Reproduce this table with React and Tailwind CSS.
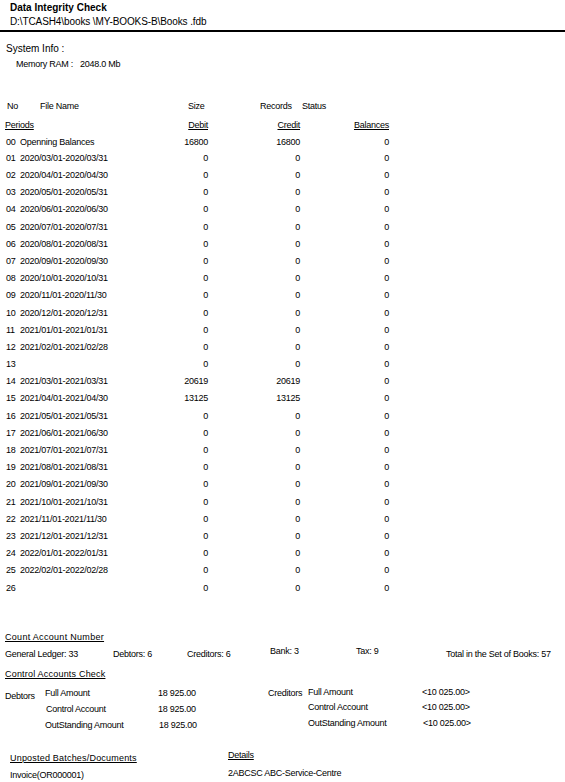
const periods = [
  ["01", "2020/03/01-2020/03/31"],
  ["02", "2020/04/01-2020/04/30"],
  ["03", "2020/05/01-2020/05/31"],
  ["04", "2020/06/01-2020/06/30"],
  ["05", "2020/07/01-2020/07/31"],
  ["06", "2020/08/01-2020/08/31"],
  ["07", "2020/09/01-2020/09/30"],
  ["08", "2020/10/01-2020/10/31"],
  ["09", "2020/11/01-2020/11/30"],
  ["10", "2020/12/01-2020/12/31"],
  ["11", "2021/01/01-2021/01/31"],
  ["12", "2021/02/01-2021/02/28"],
  ["13", ""],
  ["14", "2021/03/01-2021/03/31", "20619", "20619"],
  ["15", "2021/04/01-2021/04/30", "13125", "13125"],
  ["16", "2021/05/01-2021/05/31"],
  ["17", "2021/06/01-2021/06/30"],
  ["18", "2021/07/01-2021/07/31"],
  ["19", "2021/08/01-2021/08/31"],
  ["20", "2021/09/01-2021/09/30"],
  ["21", "2021/10/01-2021/10/31"],
  ["22", "2021/11/01-2021/11/30"],
  ["23", "2021/12/01-2021/12/31"],
  ["24", "2022/01/01-2022/01/31"],
  ["25", "2022/02/01-2022/02/28"],
  ["26", ""],
];

const Row = ({ no, label, debit = "0", credit = "0", balance = "0", className = "h-[17.2px]" }) => (
  <div className={`flex items-center pl-[6px] ${className}`}>
    <span className="w-[14px]">{no}</span>
    <span className="w-[120px]">{label}</span>
    <span className="w-[68px] text-right">{debit}</span>
    <span className="w-[92px] text-right">{credit}</span>
    <span className="w-[89px] text-right">{balance}</span>
  </div>
);

const App = () => (
  <div
    className="w-[565px] h-[782px] overflow-hidden bg-white text-black text-[9px] tracking-[-0.25px]"
    style={{ fontFamily: '"Liberation Sans", Arial, sans-serif' }}
  >
    <div className="h-[14px] flex items-center pl-[10px] text-[10px] font-bold tracking-normal">
      Data Integrity Check
    </div>
    <div className="h-[14px] flex items-center pl-[10px] text-[10px] tracking-[-0.1px]">
      D:\TCASH4\books \MY-BOOKS-B\Books .fdb
    </div>
    <div className="mt-[2px] h-[2px] bg-black" />

    <div className="mt-[10px] h-[12px] flex items-center pl-[6px] text-[10px] tracking-normal">
      System Info :
    </div>
    <div className="mt-[5px] h-[12px] flex items-center pl-[16px] gap-[7px]">
      <span>Memory RAM :</span>
      <span>2048.0 Mb</span>
    </div>

    <div className="mt-[30px] h-[12px] flex items-center pl-[7px]">
      <span className="w-[33px]">No</span>
      <span className="w-[148px]">File Name</span>
      <span className="w-[72px]">Size</span>
      <span className="w-[42px]">Records</span>
      <span>Status</span>
    </div>

    <div className="mt-[7px] h-[12px] flex items-center pl-[5px]">
      <span className="w-[135px] underline">Periods</span>
      <span className="w-[68px] text-right underline">Debit</span>
      <span className="w-[92px] text-right underline">Credit</span>
      <span className="w-[89px] text-right underline">Balances</span>
    </div>

    <div className="mt-[4px]">
      <Row no="00" label="Openning Balances" debit="16800" credit="16800" className="h-[14px]" />
      {periods.map(([no, label, debit, credit]) => (
        <Row key={no} no={no} label={label} debit={debit} credit={credit} />
      ))}
    </div>

    <div className="mt-[35px] h-[12px] flex items-center pl-[5px]">
      <span className="underline tracking-[0.3px]">Count Account Number</span>
    </div>
    <div className="mt-[3px] h-[12px] flex items-start pl-[5px] pt-[1px]">
      <span className="w-[108px]">General Ledger: 33</span>
      <span className="w-[74px]">Debtors: 6</span>
      <span className="w-[83px]">Creditors: 6</span>
      <span className="w-[86px] -mt-[3px]">Bank: 3</span>
      <span className="w-[90px] -mt-[3px]">Tax: 9</span>
      <span>Total in the Set of Books: 57</span>
    </div>

    <div className="mt-[10px] h-[12px] flex items-center pl-[5px]">
      <span className="underline tracking-[0.2px]">Control Accounts Check</span>
    </div>

    <div className="mt-[5px] flex pl-[5px]">
      <div className="flex w-[263px]">
        <span className="w-[40px] mt-[4px]">Debtors</span>
        <div className="flex flex-col">
          <div className="h-[16px] flex items-center">
            <span className="w-[113px]">Full Amount</span>
            <span>18 925.00</span>
          </div>
          <div className="h-[16px] flex items-center pl-[1px]">
            <span className="w-[112px]">Control Account</span>
            <span>18 925.00</span>
          </div>
          <div className="h-[16px] flex items-center">
            <span className="w-[114px]">OutStanding Amount</span>
            <span>18 925.00</span>
          </div>
        </div>
      </div>
      <div className="flex -mt-[1px]">
        <span className="w-[40px] mt-[2px]">Creditors</span>
        <div className="flex flex-col">
          <div className="h-[15.5px] flex items-center">
            <span className="w-[114px]">Full Amount</span>
            <span>&lt;10 025.00&gt;</span>
          </div>
          <div className="h-[15.5px] flex items-center">
            <span className="w-[114px]">Control Account</span>
            <span>&lt;10 025.00&gt;</span>
          </div>
          <div className="h-[15.5px] flex items-center">
            <span className="w-[115px]">OutStanding Amount</span>
            <span>&lt;10 025.00&gt;</span>
          </div>
        </div>
      </div>
    </div>

    <div className="mt-[19px] flex pl-[10px]">
      <div className="w-[218px] flex flex-col">
        <div className="h-[12px] flex items-center">
          <span className="underline tracking-[0.2px]">Unposted Batches/Documents</span>
        </div>
        <div className="mt-[5px] h-[12px] flex items-center">Invoice(OR000001)</div>
      </div>
      <div className="flex flex-col -mt-[3px]">
        <div className="h-[12px] flex items-center">
          <span className="underline">Details</span>
        </div>
        <div className="mt-[6px] h-[12px] flex items-center">2ABCSC ABC-Service-Centre</div>
      </div>
    </div>
  </div>
);

export default App;
